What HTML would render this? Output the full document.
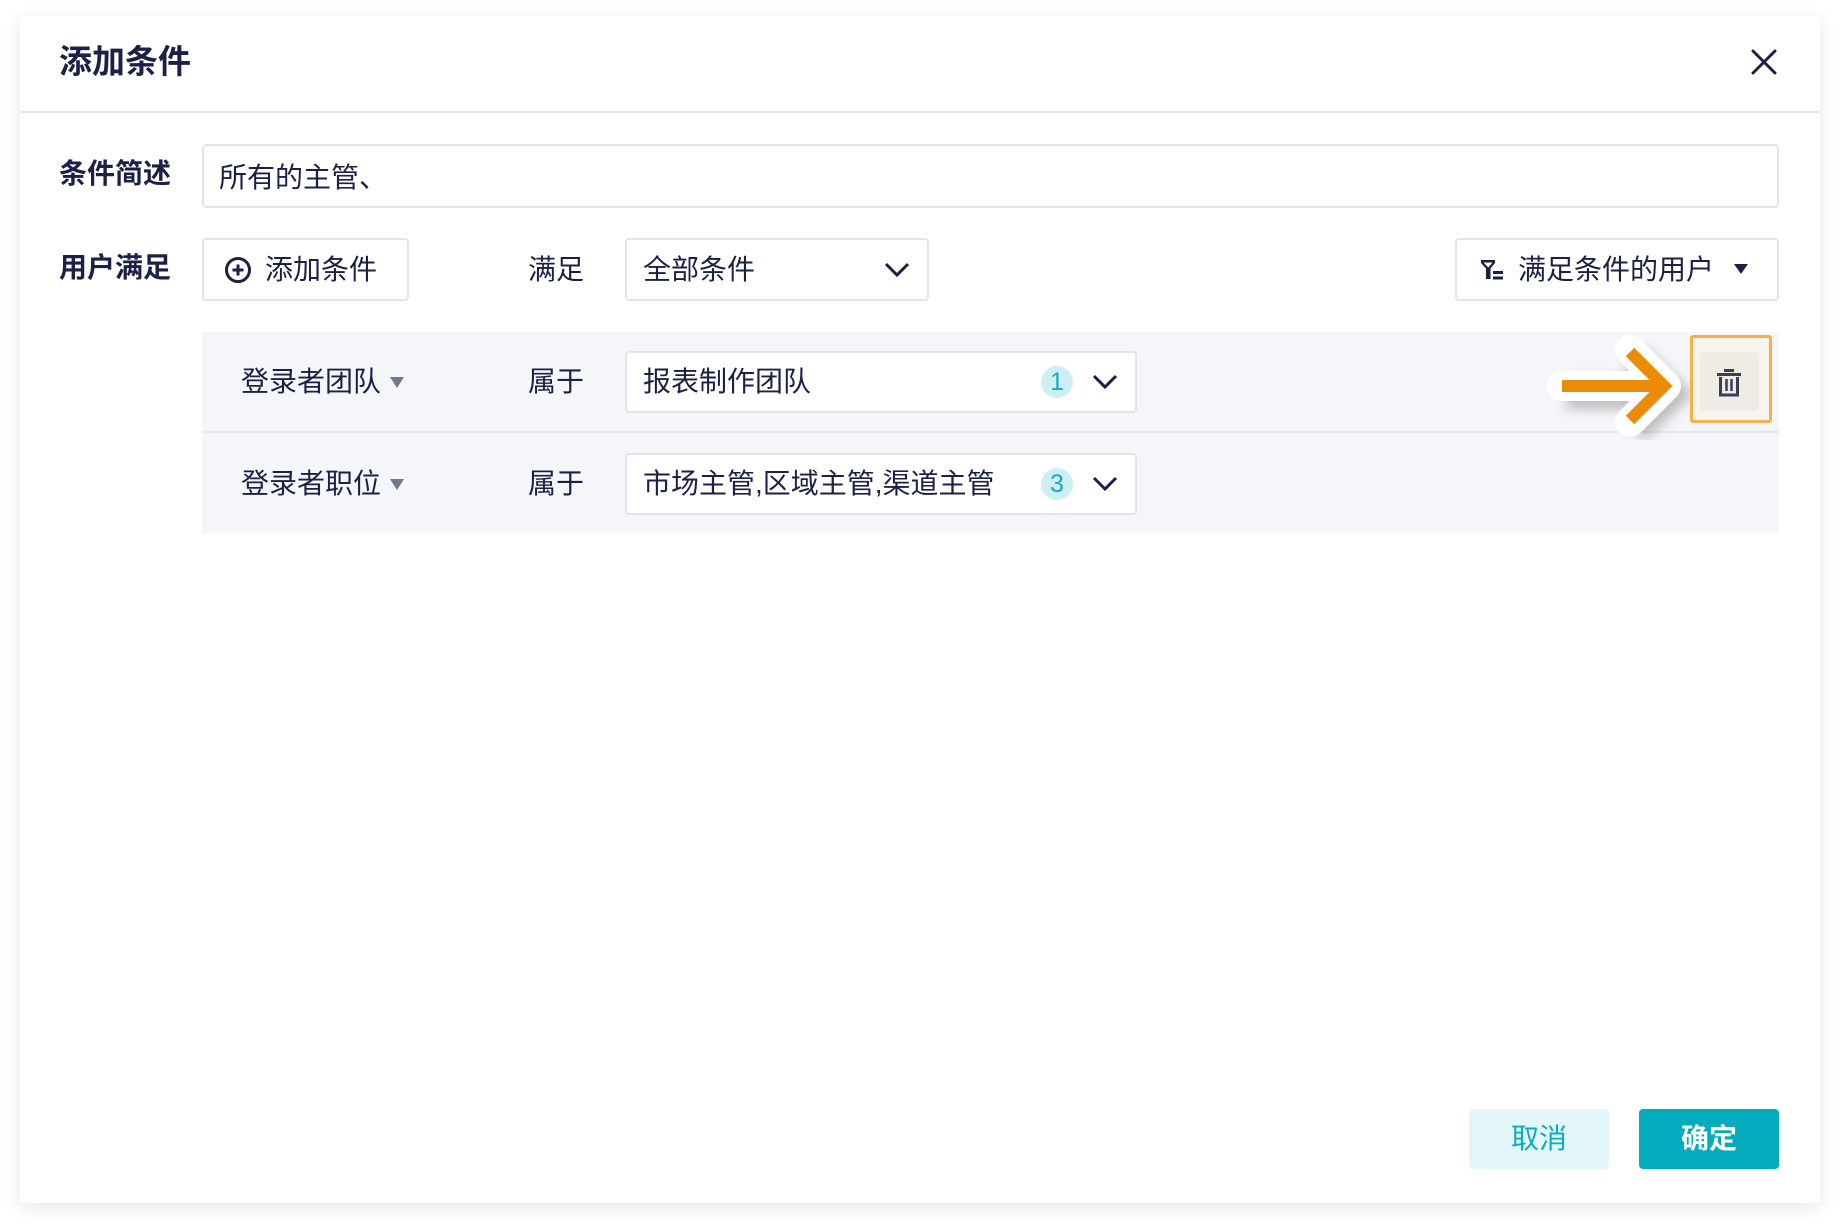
<!DOCTYPE html>
<html><head><meta charset="utf-8"><style>
*{margin:0;padding:0;box-sizing:border-box}
html,body{width:1840px;height:1228px;background:#fff;overflow:hidden;font-family:"Liberation Sans","Noto Sans CJK SC",sans-serif;color:#1c2046}
.dlg{position:absolute;left:20px;top:16px;width:1800px;height:1187px;background:#fff;box-shadow:0 4px 18px rgba(0,0,0,0.10);border-radius:2px}
.abs{position:absolute}
.t{position:absolute;font-size:28px;line-height:1;white-space:nowrap}
.box{position:absolute;border:2px solid #e3e3eb;border-radius:4px;background:#fff}
</style></head><body>
<div class="dlg"></div>
<div class="t" style="left:59px;top:45px;font-size:33px;font-weight:bold">添加条件</div>
<svg class="abs" style="left:1750px;top:48px" width="28" height="28" viewBox="0 0 28 28"><path d="M3 3L25 25M25 3L3 25" stroke="#1c2046" stroke-width="3" stroke-linecap="round"/></svg>
<div class="abs" style="left:20px;top:111px;width:1800px;height:2px;background:#e4e4ea"></div>

<div class="t" style="left:59px;top:160px;font-weight:bold">条件简述</div>
<div class="box" style="left:202px;top:144px;width:1577px;height:64px"></div>
<div class="t" style="left:219px;top:164px">所有的主管、</div>

<div class="t" style="left:59px;top:254px;font-weight:bold">用户满足</div>
<div class="box" style="left:202px;top:238px;width:207px;height:63px"></div>
<svg class="abs" style="left:224px;top:256px" width="28" height="28" viewBox="0 0 28 28"><circle cx="14" cy="14" r="11.5" fill="none" stroke="#1c2046" stroke-width="3"/><path d="M14 8.5V19.5M8.5 14H19.5" stroke="#1c2046" stroke-width="3"/></svg>
<div class="t" style="left:265px;top:256px">添加条件</div>
<div class="t" style="left:528px;top:256px">满足</div>
<div class="box" style="left:625px;top:238px;width:304px;height:63px"></div>
<div class="t" style="left:643px;top:256px">全部条件</div>
<svg class="abs" style="left:884px;top:261px" width="26" height="17" viewBox="0 0 26 17"><path d="M2 3L13 14L24 3" fill="none" stroke="#1c2046" stroke-width="3"/></svg>

<div class="box" style="left:1455px;top:238px;width:324px;height:63px"></div>
<svg class="abs" style="left:1480px;top:259px" width="24" height="22" viewBox="0 0 24 22"><path d="M1 1H15V4L10.5 9.5V20H6V9.5L1 4Z" fill="#1c2046"/><path d="M3.5 3.5H12.5L8.3 8.5Z" fill="#fff"/><rect x="13" y="12" width="10" height="3" fill="#1c2046"/><rect x="13" y="17.5" width="10" height="3" fill="#1c2046"/></svg>
<div class="t" style="left:1518px;top:256px">满足条件的用户</div>
<svg class="abs" style="left:1733px;top:263px" width="16" height="12" viewBox="0 0 16 12"><path d="M1 1H15L8 11Z" fill="#1c2046"/></svg>

<div class="abs" style="left:202px;top:332px;width:1577px;height:201px;background:#f5f6f9"></div>
<div class="abs" style="left:202px;top:431px;width:1577px;height:2px;background:#e6e7ec"></div>

<div class="t" style="left:241px;top:368px">登录者团队</div>
<svg class="abs" style="left:390px;top:377px" width="14" height="11" viewBox="0 0 14 11"><path d="M0 0H14L7 11Z" fill="#737788"/></svg>
<div class="t" style="left:528px;top:368px">属于</div>
<div class="box" style="left:625px;top:351px;width:512px;height:62px"></div>
<div class="t" style="left:643px;top:368px">报表制作团队</div>
<div class="abs" style="left:1041px;top:366px;width:32px;height:32px;border-radius:50%;background:#cdeef3;color:#10aebf;font-size:25px;line-height:32px;text-align:center">1</div>
<svg class="abs" style="left:1092px;top:373px" width="26" height="17" viewBox="0 0 26 17"><path d="M2 3L13 14L24 3" fill="none" stroke="#1c2046" stroke-width="3"/></svg>

<div class="t" style="left:241px;top:470px">登录者职位</div>
<svg class="abs" style="left:390px;top:479px" width="14" height="11" viewBox="0 0 14 11"><path d="M0 0H14L7 11Z" fill="#737788"/></svg>
<div class="t" style="left:528px;top:470px">属于</div>
<div class="box" style="left:625px;top:453px;width:512px;height:62px"></div>
<div class="t" style="left:643px;top:470px">市场主管,区域主管,渠道主管</div>
<div class="abs" style="left:1041px;top:468px;width:32px;height:32px;border-radius:50%;background:#cdeef3;color:#10aebf;font-size:25px;line-height:32px;text-align:center">3</div>
<svg class="abs" style="left:1092px;top:475px" width="26" height="17" viewBox="0 0 26 17"><path d="M2 3L13 14L24 3" fill="none" stroke="#1c2046" stroke-width="3"/></svg>

<svg class="abs" style="left:1540px;top:330px" width="150" height="110" viewBox="1540 330 150 110">
<defs><filter id="sh" x="-30%" y="-30%" width="160%" height="160%"><feGaussianBlur stdDeviation="6"/></filter></defs>
<g filter="url(#sh)" opacity="0.35"><path d="M1562 388H1668M1630 352L1668 388L1630 424" fill="none" stroke="#555" stroke-width="30" stroke-linejoin="miter" transform="translate(4,6)"/></g>
<path d="M1562 386H1666M1630 350L1666 386L1630 422" fill="none" stroke="#fff" stroke-width="30" stroke-linejoin="round" stroke-linecap="round"/>
<path d="M1562 386H1664M1630 352L1664 386L1630 420" fill="none" stroke="#ea8c08" stroke-width="12" stroke-linejoin="miter"/>
</svg>

<div class="abs" style="left:1690px;top:335px;width:82px;height:88px;border:3px solid #f5b04e;border-radius:3px;background:#f7f3ed"></div>
<div class="abs" style="left:1700px;top:352px;width:59px;height:59px;border-radius:4px;background:#efebe5"></div>
<svg class="abs" style="left:1716px;top:369px" width="26" height="28" viewBox="0 0 26 28"><path d="M8 1.5H18M1 5.5H25" stroke="#3d3e56" stroke-width="3"/><path d="M4.5 8V26H21.5V8" fill="none" stroke="#3d3e56" stroke-width="3"/><path d="M10.5 10V22M15.5 10V22" stroke="#3d3e56" stroke-width="2.5"/></svg>

<div class="abs" style="left:1469px;top:1109px;width:140px;height:60px;border-radius:4px;background:#e3f6f9;color:#0aaebf;font-size:28px;line-height:60px;text-align:center">取消</div>
<div class="abs" style="left:1639px;top:1109px;width:140px;height:60px;border-radius:4px;background:#02acbd;color:#fff;font-size:28px;line-height:60px;text-align:center;font-weight:bold">确定</div>
</body></html>
